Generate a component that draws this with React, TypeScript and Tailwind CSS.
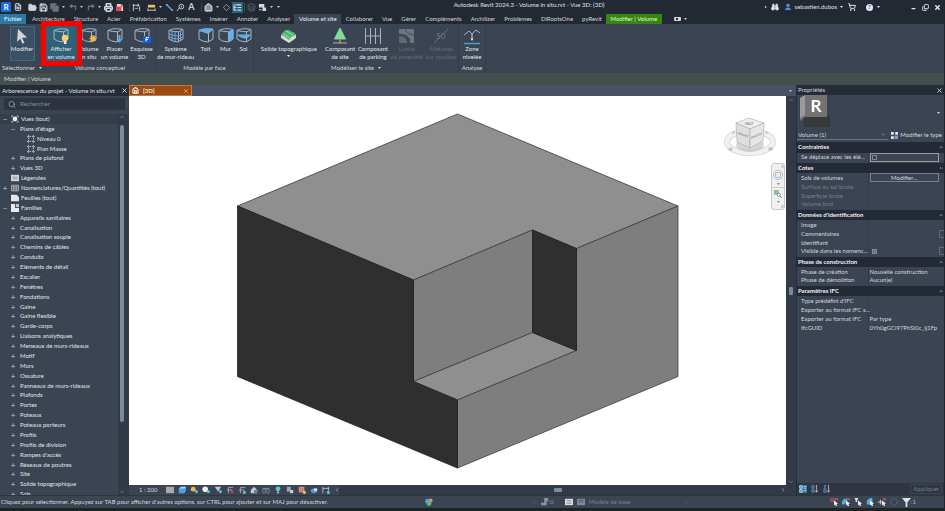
import type { ReactNode } from "react";
import {
  Printer, FolderOpen, Save, Home, Search, X, ChevronDown, ChevronUp, ChevronRight,
  ChevronLeft, ShoppingCart, Binoculars, User, Minus, Copy, FileText, Layers, ListTree, Diamond,
} from "lucide-react";

type Kids = { children?: ReactNode };

const Caret = ({ className = "" }: { className?: string }) => (
  <svg viewBox="0 0 6 4" className={`h-[2px] w-[3px] shrink-0 ${className}`} aria-hidden="true">
    <path d="M0 0h6L3 4z" fill="currentColor" />
  </svg>
);

const Divider = () => <span className="mx-px h-[9px] w-px shrink-0 bg-[#3d4654]" />;

function Tool({ label, active = false, dim = false, children }: Kids & { label: string; active?: boolean; dim?: boolean }) {
  return (
    <button
      aria-label={label}
      className={`flex h-[11px] w-[11px] shrink-0 items-center justify-center ${active ? "bg-[#2b6180]" : ""} ${dim ? "text-[#69727e]" : "text-[#d3d7dc]"}`}
    >
      {children}
    </button>
  );
}

function ToolCaret({ label }: { label: string }) {
  return (
    <button aria-label={label} className="flex h-[11px] w-[7px] shrink-0 items-center justify-center text-[#c5c9cf]">
      <Caret />
    </button>
  );
}

function TitleBar() {
  const s = "h-[9px] w-[9px]";
  return (
    <header className="flex h-[14px] shrink-0 items-center bg-[#222933] pl-px text-[#dfe2e6]">
      <div className="flex w-[48%] items-center">
        <button aria-label="Revit" className="mr-px flex h-[10px] w-[10px] items-center justify-center rounded-[1px] bg-[#1669e8] text-[8px] font-bold leading-[8px] text-white">R</button>
        <Tool label="Accueil"><FileText className="h-2 w-2" strokeWidth={3} /></Tool>
        <span className="w-1" />
        <Tool label="Ouvrir"><FolderOpen className={s} fill="currentColor" /></Tool>
        <Tool label="Enregistrer"><Save className={s} strokeWidth={3} /></Tool>
        <Tool label="Synchroniser" dim><Copy className={s} strokeWidth={3} fill="currentColor" /></Tool>
        <ToolCaret label="Options de synchronisation" />
        <Tool label="Annuler" dim>
          <svg viewBox="0 0 10 10" className="h-2 w-2"><path d="M0 4l4-3v2h5v6H7.500V5H4v2z" fill="currentColor" /></svg>
        </Tool>
        <ToolCaret label="Historique d'annulation" />
        <Tool label="Rétablir" dim>
          <svg viewBox="0 0 10 10" className="h-2 w-2"><path d="M10 4L6 1v2H1v6h1.500V5H6v2z" fill="currentColor" /></svg>
        </Tool>
        <ToolCaret label="Historique de rétablissement" />
        <Tool label="Imprimer"><Printer className={s} strokeWidth={4} /></Tool>
        <Tool label="Exporter en PDF">
          <svg viewBox="0 0 10 10" className={s}><path d="M2 1h5l2 2v6H2z" fill="#d8dade" /><path d="M1 4h6v5H1z" fill="#e2474b" /><path d="M7 1v3h2" stroke="#e2474b" fill="none" /></svg>
        </Tool>
        <span className="w-[3px]" />
        <Divider />
        <Tool label="Mesurer">
          <svg viewBox="0 0 10 10" className={s} stroke="currentColor" fill="none"><path d="M1.500 1v8M8.500 4v5M1 2.500h7M6 1l2 1.500L6 4" /><path d="M3 6h4" stroke="#d9a84d" /></svg>
        </Tool>
        <span className="w-1" />
        <Tool label="Cote alignée">
          <svg viewBox="0 0 10 10" className={s}><path d="M1 2h8v3H1z" fill="#e3c168" /><path d="M1 8h8M1 6v3M9 6v3" stroke="#d3d7dc" fill="none" /></svg>
        </Tool>
        <ToolCaret label="Options de cote" />
        <Tool label="Ligne de détail">
          <svg viewBox="0 0 10 10" className={s}><path d="M2 2l6 6" stroke="#63a8dd" strokeWidth="1.500" /><path d="M1 1h2v2H1zM7 7h2v2H7z" fill="#63a8dd" /></svg>
        </Tool>
        <Tool label="Étiquette">
          <svg viewBox="0 0 10 10" className={s} fill="none" stroke="currentColor"><path d="M1 9l3-4" /><circle cx="6" cy="4" r="2.600" /><path d="M6 3v2" /></svg>
        </Tool>
        <Tool label="Texte"><span className="text-[9px] font-bold leading-[10px]">A</span></Tool>
        <span className="w-[3px]" />
        <Divider />
        <Tool label="Vue 3D par défaut"><Home className={s} strokeWidth={3} fill="#8f969f" /></Tool>
        <ToolCaret label="Options de vue 3D" />
        <Tool label="Coupe"><Diamond className="h-[7px] w-[7px]" /></Tool>
        <Tool label="Lignes fines" active><ListTree className={s} strokeWidth={3} /></Tool>
        <Divider />
        <Tool label="Fermer les vues inactives" dim><Layers className={s} /></Tool>
        <Tool label="Changer de fenêtre">
          <svg viewBox="0 0 10 10" className={s} fill="currentColor"><path d="M1 1h6v4H1zM5 5h4v4H5z" /><path d="M1 7h3v1H1z" /></svg>
        </Tool>
        <ToolCaret label="Fenêtres" />
        <ToolCaret label="Personnaliser la barre d'outils" />
      </div>
      <h1 className="whitespace-nowrap pb-1 leading-[8px]">Autodesk Revit 2024.3 - Volume in situ.rvt - Vue 3D: {"{3D}"}</h1>
      <div className="flex flex-1 items-center justify-end pr-[3px]">
        <Caret className="rotate-90" />
        <button aria-label="Rechercher" className="ml-1"><Binoculars className="h-2 w-2" fill="currentColor" /></button>
        <button className="ml-[5px] flex items-center gap-[3px]">
          <User className="h-2 w-2 text-[#5b8fe0]" fill="currentColor" />sebastien.dubos<Caret />
        </button>
        <button aria-label="Boutique" className="ml-[5px]"><ShoppingCart className="h-2 w-2" strokeWidth={3} /></button>
        <span className="ml-1"><Divider /></span>
        <button aria-label="Aide" className="ml-1 flex items-center gap-1">
          <span className="flex h-[7px] w-[7px] items-center justify-center rounded-full bg-[#dfe8f7] font-bold leading-[6px] text-[#2863b8]">?</span>
          <Caret />
        </button>
        <button aria-label="Réduire" className="ml-[31px] flex h-2 w-[7px] items-end"><Minus className="h-[5px] w-[5px]" strokeWidth={6} /></button>
        <button aria-label="Restaurer" className="ml-1 flex"><Copy className="h-[7px] w-[7px] -scale-x-100 rotate-180" strokeWidth={3} /></button>
        <button aria-label="Fermer" className="ml-[5px] flex"><X className="h-[7px] w-[7px]" strokeWidth={5} /></button>
      </div>
    </header>
  );
}

const tabs = ["Architecture", "Structure", "Acier", "Préfabrication", "Systèmes", "Insérer", "Annoter", "Analyser", "Volume et site", "Collaborer", "Vue", "Gérer", "Compléments", "Archilizer", "Problèmes", "DiRootsOne", "pyRevit"];

function TabBar() {
  return (
    <nav className="flex h-[10px] shrink-0 bg-[#222933] text-[#d3d7dc]">
      <button className="mr-px w-[26px] bg-[#2b77a5] text-white">Fichier</button>
      {tabs.map((t) => (
        <button key={t} className={`whitespace-nowrap pl-[5px] pr-1 ${t === "Volume et site" ? "bg-[#3b4453] text-[#eceef0]" : ""}`}>{t}</button>
      ))}
      <button className="w-[56px] whitespace-nowrap bg-[#34860c] text-[#e9f2e4]">Modifier | Volume</button>
      <button aria-label="Affichage du ruban" className="ml-3 flex items-center gap-[3px]">
        <span className="flex h-1 w-[7px] items-center justify-center rounded-[1px] bg-[#d3d7dc]"><span className="h-[2px] w-[2px] bg-[#222933]" /></span>
        <Caret />
      </button>
    </nav>
  );
}

function Mass({ children }: Kids) {
  return (
    <svg viewBox="0 0 18 18" className="h-[18px] w-[18px]" fill="none" stroke="#a9b4c2" strokeWidth="1" aria-hidden="true">
      <path d="M2 3.500Q7 .8 15.500 2.200Q16 3 12 4.800Q6 4.800 2 3.500zM2 3.500v8.500Q5 14.500 11 15L16 12V2.500M11.500 5v10" />
      {children}
    </svg>
  );
}

function Cmd({ a, b, w, icon, active = false, off = false, drop = false }: { a: string; b?: string; w: string; icon: ReactNode; active?: boolean; off?: boolean; drop?: boolean }) {
  return (
    <button className={`flex h-[35px] flex-col items-center whitespace-nowrap ${w} ${active ? "bg-[#2f6278]" : ""} ${off ? "text-[#626b78]" : "text-[#e4e6ea]"}`}>
      <span className="flex h-[19px] shrink-0 items-center justify-center">{icon}</span>
      <span>{a}</span>
      {b && <span>{b}</span>}
      {drop && <Caret className="mt-[2px]" />}
    </button>
  );
}

function Panel({ title, drop = false, className = "", children }: Kids & { title: string; drop?: boolean; className?: string }) {
  return (
    <section className={`flex h-full flex-col border-r border-[#353d4a] ${className}`}>
      <div className="flex flex-1 justify-center pt-[2px]">{children}</div>
      <h2 className="flex h-[9px] items-center justify-center gap-1 whitespace-nowrap text-[#d3d7dc]">{title}{drop && <Caret />}</h2>
    </section>
  );
}

function Ribbon() {
  return (
    <div className="flex h-12 shrink-0 bg-[#3b4453]">
      <Panel title="Sélectionner" drop className="w-[45px]">
        <button className="flex h-[35px] w-[25px] flex-col items-center border border-[#3d6a86] bg-[#3b5063] text-[#e4e6ea]">
          <span className="flex h-[18px] items-center">
            <svg viewBox="0 0 16 16" className="h-4 w-4" aria-hidden="true"><path d="M4 1l9 8.500-5 .3 2.500 5-2 .9-2.300-5L3 14z" fill="#d3d6da" /></svg>
          </span>
          Modifier
        </button>
      </Panel>
      <Panel title="Volume conceptuel" className="w-[111px]">
        <div className="relative">
          <Cmd a="Afficher" b="en volume" w="w-[31px]" active icon={<Mass><circle cx="13" cy="11" r="3.200" fill="#ffd06a" stroke="none" /><path d="M12 14h2.500v3H12z" fill="#e8e8e8" stroke="none" /></Mass>} />
          <span className="pointer-events-none absolute -left-[5px] -right-[5px] -top-[5px] h-[45px] border-[5px] border-[#fb0000]" />
        </div>
        <Cmd a="Volume" b="in situ" w="w-[24px]" icon={<Mass><path d="M13 8v7M9.500 11.500h7M10.500 9l5 5M15.500 9l-5 5" stroke="#f3b85e" strokeWidth="1.300" /></Mass>} />
        <Cmd a="Placer" b="un volume" w="w-[28px]" icon={<Mass><path d="M12.500 8h2v4h2l-3 4-3-4h2z" fill="#5aa9e6" stroke="none" /></Mass>} />
        <Cmd a="Esquisse" b="3D" w="w-[26px]" icon={<Mass><rect x="10" y="9" width="8" height="7" rx="1" fill="#0d5fe8" stroke="none" /><path d="M13 14.500v-4h3M13 12.500h2" stroke="#fff" /></Mass>} />
      </Panel>
      <Panel title="Modèle par face" className="w-[98px]">
        <Cmd a="Système" b="de mur-rideau" w="w-[38px]" icon={<Mass><path d="M2 7q5 2 9.500 2l4-2M2 10q5 2 9.500 2l4-2M5 4v10M8 4.500v10M13.500 4v9.500" stroke="#6aa9d8" /></Mass>} />
        <Cmd a="Toit" w="w-[22px]" icon={<Mass><path d="M2 3L15.500 2l-4 4.500Q6 5 2 3z" fill="#5fb0ee" stroke="#5fb0ee" /></Mass>} />
        <Cmd a="Mur" w="w-[18px]" icon={<Mass><path d="M12 5l4-2.500V12l-4 3z" fill="#5fb0ee" stroke="#5fb0ee" /></Mass>} />
        <Cmd a="Sol" w="w-[18px]" icon={<Mass><path d="M2.500 8h13l-4 3.500Q6 11 2.500 8z" fill="#5fb0ee" stroke="#5fb0ee" /></Mass>} />
      </Panel>
      <Panel title="Modéliser le site" drop className="w-[205px]">
        <Cmd a="Solide topographique" w="w-[70px]" drop icon={
          <svg viewBox="0 0 18 18" className="h-[18px] w-[18px]"><path d="M1 8l7-5 8 5v3l-7 5-8-5z" fill="#d5dbd8" /><path d="M1 8q3-5 6-5 2-1 3 1 5 1 6 4-5 1-7 5-4-4-8-5z" fill="#54b56e" /><path d="M3 7l7 4M6 4l7 4" stroke="#9adcaa" /></svg>} />
        <Cmd a="Composant" b="de site" w="w-[33px]" icon={
          <svg viewBox="0 0 18 18" className="h-[18px] w-[18px]"><path d="M9 1l5.500 11h-11z" fill="#7fdc9a" stroke="#7fdc9a" strokeLinejoin="round" /><path d="M8 12h2v4H8z" fill="#c9713a" /><path d="M2 16h14" stroke="#aab2bd" /></svg>} />
        <Cmd a="Composant" b="de parking" w="w-[33px]" icon={
          <svg viewBox="0 0 18 18" className="h-[18px] w-[18px]" stroke="#aab2bd" fill="none"><path d="M1.500 1v16M6.500 1v16M11.500 1v16M16.500 1v16M1 9h16" /></svg>} />
        <Cmd a="Limite" b="de propriété" w="w-[35px]" off icon={
          <svg viewBox="0 0 18 18" className="h-[18px] w-[18px]"><path d="M1 2h15v14h-4q0-9-11-9z" fill="#6d7581" /><path d="M1 9q8 0 8 7H1z" fill="#5f6773" /><path d="M1 7q11 0 11 9M7 2q1 5 9 6" stroke="#454d5a" fill="none" /></svg>} />
        <Cmd a="Altitudes" b="sur courbes" w="w-[34px]" off icon={
          <svg viewBox="0 0 18 18" className="h-[18px] w-[18px]"><path d="M2 16L16 2" stroke="#626b78" /><text x="4" y="12" fontSize="8" fill="#727b88">50</text></svg>} />
      </Panel>
      <Panel title="Analyse" className="w-[27px]">
        <Cmd a="Zone" b="nivelée" w="w-[24px]" icon={
          <svg viewBox="0 0 18 18" className="h-[18px] w-[18px]" fill="none"><path d="M1 8l5-4 3 3 4-4 4 3" stroke="#aab2bd" /><path d="M9 7v6" stroke="#d8dce0" /><path d="M7.500 11.500h3L9 14z" fill="#d8dce0" /><path d="M1 16.500h16" stroke="#4e9ad6" strokeWidth="1.500" /></svg>} />
      </Panel>
    </div>
  );
}

type Node = [depth: number, sign: string, label: string, icon?: string];
const tree: Node[] = [
  [0, "−", "Vues (tout)", "views"], [1, "−", "Plans d'étage"], [2, "", "Niveau 0", "plan"], [2, "", "Plan Masse", "plan"],
  [1, "+", "Plans de plafond"], [1, "+", "Vues 3D"], [0, "", "Légendes", "legend"],
  [0, "+", "Nomenclatures/Quantités (tout)", "table"], [0, "", "Feuilles (tout)", "sheet"], [0, "−", "Familles", "family"],
  ...["Appareils sanitaires", "Canalisation", "Canalisation souple", "Chemins de câbles", "Conduits", "Eléments de détail", "Escalier", "Fenêtres", "Fondations", "Gaine", "Gaine flexible", "Garde-corps", "Liaisons analytiques", "Meneaux de murs-rideaux", "Motif", "Murs", "Ossature", "Panneaux de murs-rideaux", "Plafonds", "Portes", "Poteaux", "Poteaux porteurs", "Profils", "Profils de division", "Rampes d'accès", "Réseaux de poutres", "Site", "Solide topographique", "Sols"].map((l): Node => [1, "+", l]),
];

const treeIcons: Record<string, ReactNode> = {
  views: <><path d="M1 3V1h2M7 1h2v2M9 7v2H7M3 9H1V7" stroke="#c9cdd3" fill="none" /><circle cx="5" cy="5" r="3" fill="#eef0f2" /></>,
  plan: <path d="M2 0v10M8 0v10M0 2h10M0 8h10" stroke="#d6dade" strokeDasharray="2 1" fill="none" />,
  legend: <><path d="M0 1h10v8H0z" fill="#d2d3d3" /><path d="M2 4h6M2 6h6" stroke="#8e9299" /></>,
  table: <path d="M.5 1.500h9v7h-9zM0 3.500h10M3.500 2v7M6.500 2v7M0 6h10" stroke="#b6bbc3" fill="none" />,
  sheet: <path d="M0 1h7l3 3v5H0z" fill="#e4e6e8" />,
  family: <><path d="M0 0h5v5h5v5H0z" fill="#e8eaec" /><path d="M6 0h4v4H6z" fill="#bfc5cc" /></>,
};

const indent = ["pl-[2px]", "pl-[10px]", "pl-[27px]"];

function Browser() {
  return (
    <aside className="flex w-[129px] shrink-0 flex-col bg-[#3b4453]">
      <div className="flex h-[11px] items-center justify-between bg-[#252c38] pl-[2px] pr-px text-[#e1e4e8]">
        <h2 className="whitespace-nowrap">Arborescence du projet - Volume in situ.rvt</h2>
        <button aria-label="Fermer l'arborescence"><X className="h-[7px] w-[7px]" strokeWidth={3} /></button>
      </div>
      <label className="mx-1 mt-[2px] flex h-3 shrink-0 items-center gap-1 bg-[#2d3440] pl-1">
        <Search className="h-[9px] w-[9px] text-[#aab2bd]" />
        <input aria-label="Rechercher" placeholder="Rechercher" className="w-full bg-transparent outline-none placeholder:text-[#87909c]" />
      </label>
      <div className="mt-1 flex min-h-0 flex-1">
        <div className="min-h-0 flex-1 overflow-hidden">
          <ul className="flex h-[calc(100%+4px)] flex-col text-[#e2e5e9]">
            {tree.map(([d, sign, label, icon], i) => (
              <li key={label} className={`min-h-0 flex-1 ${i === 0 ? "bg-[#353d4a]" : ""}`}>
                <button className={`flex h-full items-center whitespace-nowrap ${indent[d]}`}>
                  {d < 2 && <span className="w-[6px] text-center text-[8px] leading-[8px] text-[#c3c8cf]">{sign}</span>}
                  {icon && <svg viewBox="0 0 10 10" className={`h-2 w-2 ${d === 0 ? "ml-[3px]" : ""}`} aria-hidden="true">{treeIcons[icon]}</svg>}
                  <span className={icon ? "ml-[2px]" : "ml-1"}>{label}</span>
                </button>
              </li>
            ))}
          </ul>
        </div>
        <div className="flex w-2 flex-col items-center bg-[#323a47] text-[#aab2bd]">
          <ChevronUp className="h-[6px] w-[6px] shrink-0" />
          <span className="mt-[5px] h-[78%] w-1 rounded-full bg-[#7a8aa1]" />
          <ChevronDown className="mt-auto h-[6px] w-[6px] shrink-0" />
        </div>
        <span className="w-[3px] bg-[#323a47]" />
      </div>
    </aside>
  );
}

function Model() {
  return (
    <svg viewBox="130 96 656 389" className="h-full w-full" strokeLinejoin="round" role="img" aria-label="Volume in situ">
      <g stroke="#3c3c3c" strokeWidth=".8">
        <path d="M458 114L678.500 206l-101.500 42.500L533 230 414 280 238 206z" fill="#8f8f8f" />
        <path d="M414 280l119-50v102.500l-119 49z" fill="#7e7e7e" />
        <path d="M414 381.500l119-49 44 18L458 400z" fill="#8f8f8f" />
        <path d="M678.500 206v170.500L458 468v-68l119-49.500V248.500z" fill="#7e7e7e" />
      </g>
      <g stroke="#1f1f1f" strokeWidth=".8" fill="#2f2f2f">
        <path d="M533 230l44 18.500v102l-44-18z" />
        <path d="M238 206l176 74v101.500l44 18.500v68l-220-91.500z" />
      </g>
    </svg>
  );
}

function ViewCube() {
  return (
    <svg viewBox="0 0 54 42" className="h-[42px] w-[54px]" aria-label="ViewCube" role="img">
      <ellipse cx="27" cy="25" rx="23" ry="11" fill="none" stroke="#d4d4d4" strokeWidth="6" />
      <ellipse cx="27" cy="25" rx="23" ry="11" fill="none" stroke="#f1f1f1" strokeWidth="4.500" />
      <path d="M5 32l3-2 2 3-3 1zM45 31l4-1 1 3-4 1zM9 15l2-1 1 2-2 1zM42 15l2-1 1 2-2 1z" fill="#c2c2c2" />
      <ellipse cx="27" cy="28" rx="14" ry="7" fill="#b9b9b9" opacity=".6" />
      <g stroke="#a9a9a9" strokeWidth=".6">
        <path d="M26 1l15 5-14 6L13 6z" fill="#eeeeee" />
        <path d="M13 6l14 6v19l-13-6z" fill="#dedede" />
        <path d="M27 12l14-6-1 18-13 7z" fill="#e6e6e6" />
      </g>
      <text transform="matrix(1 .4 0 1 15 17)" fontSize="3" fontWeight="bold" fill="#7d7d7d">AVANT</text>
      <text transform="matrix(1 -.4 0 1 28 22)" fontSize="3" fontWeight="bold" fill="#7d7d7d">DROITE</text>
      <text x="22" y="7.500" fontSize="3" fontWeight="bold" fill="#8d8d8d">HAUT</text>
    </svg>
  );
}

const viewTools: [string, ReactNode][] = [
  ["Niveau de détail", <path d="M0 1h10v8H0z" fill="#a9aaa9" />],
  ["Style visuel", <><path d="M1 3l3-2h6v5L8 9H1z" fill="#4aa0ea" /><path d="M1 3l3-2h6L8 3z" fill="#a9d5f7" /></>],
  ["Trajectoire du soleil", <><circle cx="4" cy="4" r="3" fill="#f2b650" /><circle cx="8" cy="7" r="2" fill="#4cc5dc" /></>],
  ["Ombres", <><circle cx="4" cy="4" r="3.500" fill="#f0f0f0" /><circle cx="8" cy="7" r="2" fill="#4cc5dc" /></>],
  ["Rendu", <><path d="M1 1h8L5 7z" fill="#c5cad1" /><circle cx="8" cy="7" r="2" fill="#4cc5dc" /></>],
  ["Cadrer la vue", <><path d="M3 9V2h6M1 5h7" stroke="#b3bac4" fill="none" /><path d="M6 6l3 3M9 6l-3 3" stroke="#e8505b" /></>],
  ["Afficher le cadrage", <><path d="M3 9V2h6M1 5h7" stroke="#b3bac4" fill="none" /><circle cx="8" cy="8" r="2" fill="#4cc5dc" /></>],
  ["Verrouiller la vue 3D", <><path d="M1 5l4-4 4 4v4H1z" fill="#c5cad1" /><path d="M5 5h4v4H5z" fill="#4b8d95" /></>],
  ["Masquer temporairement", <path d="M1 6a1.800 1.800 0 103 0a1.800 1.800 0 10-3 0M6 6a1.800 1.800 0 103 0a1.800 1.800 0 10-3 0M1 3h8" stroke="#8d97a5" fill="none" />],
  ["Éléments cachés", <><circle cx="5" cy="3.500" r="3" fill="#43d3d8" /><path d="M4 7h2v2H4z" fill="#e0e3e6" /></>],
  ["Propriétés temporaires", <><path d="M1 1h5v6H1z" fill="#9aa4b2" /><path d="M5 5h4v4H5z" fill="#c5cad1" /></>],
  ["Modèle analytique", <><path d="M1 1h7v7H1z" fill="#c59b8c" /><path d="M2 2l5 5M7 2L2 7" stroke="#d24e43" /><circle cx="8" cy="8" r="2" fill="#e6bf54" /></>],
  ["Jeux de déplacement", <><ellipse cx="5" cy="6" rx="4" ry="3" fill="#4c9ce4" /><path d="M5 3h4v3H5z" fill="#dfe5ea" /></>],
  ["Contraintes", <><path d="M1 1v8M1 3h8M8 1v5" stroke="#c5cad1" fill="none" /><circle cx="8" cy="8" r="2" fill="#4cc5dc" /></>],
];

function IconButton({ label, children, on = false }: Kids & { label: string; on?: boolean }) {
  return (
    <button aria-label={label} className={on ? "bg-[#2f7ba6]" : ""}>
      <svg viewBox="0 0 10 10" className="h-2 w-2">{children}</svg>
    </button>
  );
}

function Viewport() {
  return (
    <main className="flex min-w-0 flex-1 flex-col">
      <div className="flex h-[11px] shrink-0 items-center justify-between bg-[#495165] pr-1">
        <div className="flex h-full w-[63px] items-center border border-[#c27a45] bg-[#9c4a12] px-[2px] font-bold text-[#f1e6dc]">
          <Home className="h-[7px] w-[7px]" strokeWidth={4} />
          <span className="ml-1 flex-1">{"{3D}"}</span>
          <button aria-label="Fermer la vue"><X className="h-[6px] w-[6px]" /></button>
        </div>
        <Caret className="text-[#b9c0ca]" />
      </div>
      <div className="flex min-h-0 flex-1">
        <div className="relative min-w-0 flex-1 bg-white">
          <Model />
          <div className="absolute right-[9px] top-[21px]"><ViewCube /></div>
          <div className="absolute right-px top-[67px] flex h-[47px] w-[14px] flex-col items-center justify-between rounded-[3px] border border-[#c9c9c9] bg-[#f0f0f0] py-px text-[#8b8b8b]">
            <span className="h-[3px] w-[3px] self-end rounded-full border border-[#b3b3b3]" />
            <button aria-label="Disque de navigation" className="flex h-[10px] w-[10px] items-center justify-center rounded-full border border-[#b4bdc8]"><span className="h-[6px] w-[6px] rounded-[2px] border border-[#b4bdc8]" /></button>
            <Caret />
            <span className="h-px w-full bg-[#c9c9c9]" />
            <button aria-label="Zoom"><svg viewBox="0 0 10 10" className="h-2 w-2"><path d="M0 0h6v6H0z" fill="#8cc287" /><circle cx="6" cy="6" r="2" fill="#fff" stroke="#76808c" /><path d="M7.500 7.500L10 10" stroke="#76808c" /></svg></button>
            <Caret />
            <span className="h-[3px] w-[3px] self-end rounded-full border border-[#b3b3b3]" />
          </div>
        </div>
        <div className="flex w-[10px] shrink-0 flex-col items-center justify-between bg-[#323a47] text-[#aab2bd]">
          <ChevronUp className="mt-px h-[6px] w-[6px]" />
          <span className="h-2 w-1 rounded-[1px] bg-[#7a8aa1]" />
          <ChevronDown className="h-[6px] w-[6px]" />
        </div>
      </div>
      <div className="flex h-[10px] shrink-0 items-center bg-[#323a47] text-[#d3d7dc]">
        <div className="flex h-full w-[210px] items-center gap-1 bg-[#3b4453] pl-[10px]">
          <button className="mr-1 w-[19px] whitespace-nowrap">1 : 200</button>
          {viewTools.map(([label, icon]) => <IconButton key={label} label={label}>{icon}</IconButton>)}
          <ChevronLeft className="h-[6px] w-[6px] shrink-0" />
        </div>
        <div className="flex flex-1 justify-center"><span className="mr-1 h-1 w-2 rounded-[1px] bg-[#7a8aa1]" /></div>
        <ChevronRight className="mr-[10px] h-[6px] w-[6px]" />
      </div>
    </main>
  );
}

type Row = { label: string; value?: string; kind?: "check" | "checked" | "button"; off?: boolean; end?: boolean };
const groups: [string, Row[]][] = [
  ["Contraintes", [{ label: "Se déplace avec les élé...", kind: "check" }]],
  ["Cotes", [{ label: "Sols de volumes", kind: "button", value: "Modifier..." }, { label: "Surface au sol brute", off: true }, { label: "Superficie brute", off: true }, { label: "Volume brut", off: true }]],
  ["Données d'identification", [{ label: "Image" }, { label: "Commentaires", end: true }, { label: "Identifiant" }, { label: "Visible dans les nomenc...", kind: "checked", end: true }]],
  ["Phase de construction", [{ label: "Phase de création", value: "Nouvelle construction" }, { label: "Phase de démolition", value: "Aucun(e)" }]],
  ["Paramètres IFC", [{ label: "Type prédéfini d'IFC" }, { label: "Exporter au format IFC s..." }, { label: "Exporter au format IFC", value: "Par type" }, { label: "IfcGUID", value: "0Yh0gGCi97PhSI0c_ij1Fp" }]],
];

function Value({ row }: { row: Row }) {
  const box = "block h-[5px] w-[5px] appearance-none border border-[#7d8795]";
  if (row.kind === "check") return <div className="flex h-[9px] items-center border border-[#a39c98] pl-px"><input id={row.label} type="checkbox" className={box} /></div>;
  if (row.kind === "checked") return <div className="flex items-center gap-px pl-[2px]"><input id={row.label} type="checkbox" defaultChecked disabled className={`${box} checked:bg-[#6c7583]`} /></div>;
  if (row.kind === "button") return <button id={row.label} className="block h-[9px] w-full border border-[#77818f] leading-[6px]">{row.value}</button>;
  return <>{row.value}</>;
}

function Properties() {
  return (
    <aside className="flex w-[148px] shrink-0 flex-col border-l border-[#252c38] bg-[#3b4453] text-[#d3d7dc]">
      <div className="flex h-[10px] items-center justify-between bg-[#252c38] px-px">
        <h2>Propriétés</h2>
        <button aria-label="Fermer les propriétés"><X className="h-[7px] w-[7px]" strokeWidth={3} /></button>
      </div>
      <div className="flex h-[35px] items-start justify-between pl-[3px] pr-1">
        <svg viewBox="0 0 30 32" className="h-8 w-[30px]" aria-hidden="true">
          <path d="M4 20h26v12H4z" fill="#383838" /><path d="M0 3l5-3v21l-5 3z" fill="#9a9a9a" /><path d="M5 0h22v22H5L0 26V23l5-3z" fill="#737373" />
          <text x="10.500" y="17" fontSize="17" fontWeight="bold" fill="#fff">R</text>
        </svg>
        <Caret className="self-center" />
      </div>
      <div className="flex h-[10px] items-center justify-between pr-[2px]">
        <div className="flex h-full w-[91px] items-center border-b border-[#6c7686] pr-[2px]">
          <select aria-label="Type" className="w-full appearance-none bg-transparent pl-px"><option>Volume (1)</option></select>
          <ChevronDown className="h-[5px] w-[5px]" />
        </div>
        <button className="flex items-center gap-[2px] whitespace-nowrap">
          <svg viewBox="0 0 10 10" className="h-[7px] w-[7px]"><path d="M0 0h4v4H0zM6 0h4v4H6zM0 6h4v4H0z" fill="#dfe3e8" /><path d="M5 5h5v5H5z" fill="#67a3d4" /></svg>
          Modifier le type
        </button>
      </div>
      <table className="mt-px w-full table-fixed border-collapse">
        <colgroup><col className="w-[71px]" /><col /><col className="w-[5px]" /></colgroup>
        {groups.map(([name, rows]) => (
          <tbody key={name}>
            <tr className="h-[11px]">
              <th colSpan={2} scope="rowgroup" className="border-t border-[#3b4453] bg-[#232a36] p-0 pl-px text-left font-bold text-[#f0f1f3]">{name}</th>
              <th className="border-t border-[#3b4453] bg-[#232a36] p-0"><ChevronUp className="h-1 w-1" strokeWidth={4} /></th>
            </tr>
            {rows.map((r) => (
              <tr key={r.label} className={`h-[9px] ${r.off ? "text-[#78818e]" : ""}`}>
                <th scope="row" className="whitespace-nowrap border-r border-[#353d4a] p-0 pl-1 text-left font-normal"><label htmlFor={r.label}>{r.label}</label></th>
                <td className="whitespace-nowrap p-0 pl-px"><Value row={r} /></td>
                <td className="p-0">{r.end && <span className="block h-2 w-[5px] border border-r-0 border-[#5f6977]" />}</td>
              </tr>
            ))}
          </tbody>
        ))}
      </table>
      <div className="mt-auto flex h-3 items-center gap-1 bg-[#2f3642] px-[2px]">
        <IconButton label="Regrouper" on><path d="M1 1h3v3H1zM1 6h3v3H1zM6 2h3M6 4h3M6 7h3" stroke="#dce8f0" fill="none" /></IconButton>
        <IconButton label="Trier par ordre croissant"><path d="M1 1h3v3H1zM1 6h3v3H1z" stroke="#5fa4d4" fill="none" /><path d="M7 0v9M5.500 7L7 9l1.500-2" stroke="#c5cad1" fill="none" /></IconButton>
        <IconButton label="Trier par ordre décroissant"><path d="M1 1h3L1 4h3M1 6h3v3H1z" stroke="#5fa4d4" fill="none" /><path d="M7 0v9M5.500 7L7 9l1.500-2" stroke="#c5cad1" fill="none" /></IconButton>
        <button disabled className="ml-auto border border-[#3d4552] px-[2px] text-[#727b88]">Appliquer</button>
      </div>
    </aside>
  );
}

function StatusBar() {
  const cursor = <path d="M5 3l5 4-2 .5L9 10H7L6.500 8 5 9z" fill="#eceef0" />;
  return (
    <footer className="flex h-[13px] shrink-0 items-center border-t border-[#2e3541] bg-[#3b4453] text-[#d3d7dc]">
      <p className="w-[45%] whitespace-nowrap pl-px">Cliquez pour sélectionner. Appuyez sur TAB pour afficher d'autres options, sur CTRL pour ajouter et sur MAJ pour désactiver.</p>
      <div className="flex w-[112px] items-center justify-between">
        <IconButton label="Sous-projets"><circle cx="3" cy="4" r="3" fill="#4b9fe4" /><circle cx="7" cy="3" r="2.500" fill="#e88a6a" /><circle cx="5" cy="7" r="3" fill="#4fc275" /></IconButton>
        <ChevronDown className="h-[5px] w-[5px] text-[#78818e]" />
      </div>
      <span className="ml-1 flex w-5 items-center text-[#8b94a1]"><svg viewBox="0 0 10 10" className="h-2 w-2"><path d="M4 0h5v4H7v5H0V6h4z" fill="currentColor" /></svg>:0</span>
      <div className="ml-1 flex items-center gap-1">
        <IconButton label="Variantes"><path d="M0 1h10v8H0z" fill="#dcdedf" /><path d="M2 3h6M2 5h6M2 7h6" stroke="#8b94a1" /></IconButton>
        <IconButton label="Exclure les variantes"><path d="M0 1h10v8H0z" fill="#7f8896" /><path d="M2 3h6M2 5h6" stroke="#4d5664" /></IconButton>
        <select aria-label="Variante active" className="w-[92px] appearance-none bg-transparent text-[#78818e]"><option>Modèle de base</option></select>
        <ChevronDown className="h-[5px] w-[5px] text-[#78818e]" />
      </div>
      <div className="ml-auto mr-[28px] flex items-center gap-1">
        <IconButton label="Sélectionner les liens"><path d="M0 1h5v3H0zM6 0l4 3M10 0L6 3" stroke="#e0605f" fill="none" />{cursor}</IconButton>
        <IconButton label="Sélectionner les éléments sous-jacents"><path d="M0 4l3-3h3v4L3 8H0z" fill="#5ba9e4" /><path d="M6 0l4 3M10 0L6 3" stroke="#e0605f" />{cursor}</IconButton>
        <IconButton label="Sélectionner les éléments verrouillés"><path d="M1 0h4v2H4v3H2V2H1z" fill="#dfe3e8" />{cursor}</IconButton>
        <IconButton label="Sélectionner par face"><path d="M1 3l4-3h3v8H1z" fill="#5ba9e4" />{cursor}</IconButton>
        <IconButton label="Faire glisser"><path d="M0 5h5M3 2v6" stroke="#dfe3e8" /><path d="M6 0l4 3M10 0L6 3" stroke="#e0605f" />{cursor}</IconButton>
        <IconButton label="Processus"><circle cx="5" cy="5" r="4" stroke="#727c8a" strokeDasharray="2 1" fill="none" /></IconButton>
        <button className="flex items-center text-[#a9b7c9]"><svg viewBox="0 0 10 10" className="h-[9px] w-[9px]"><path d="M0 0h10L6 5v5H4V5z" fill="#dcdfe3" /></svg>:1</button>
      </div>
    </footer>
  );
}

export default function App() {
  return (
    <div className="flex h-screen flex-col overflow-hidden bg-[#20262b] pr-px font-['Lato','Open_Sans',sans-serif] text-[6px] leading-[8px]">
      <TitleBar />
      <TabBar />
      <Ribbon />
      <div className="flex h-[13px] shrink-0 items-center border-t border-[#384247] bg-[#434f4f] pl-1 text-[#d3d7dc]">Modifier | Volume</div>
      <div className="flex min-h-0 flex-1">
        <Browser />
        <Viewport />
        <Properties />
      </div>
      <StatusBar />
      <div className="h-[3px] shrink-0 bg-[#1d2423]" />
    </div>
  );
}
